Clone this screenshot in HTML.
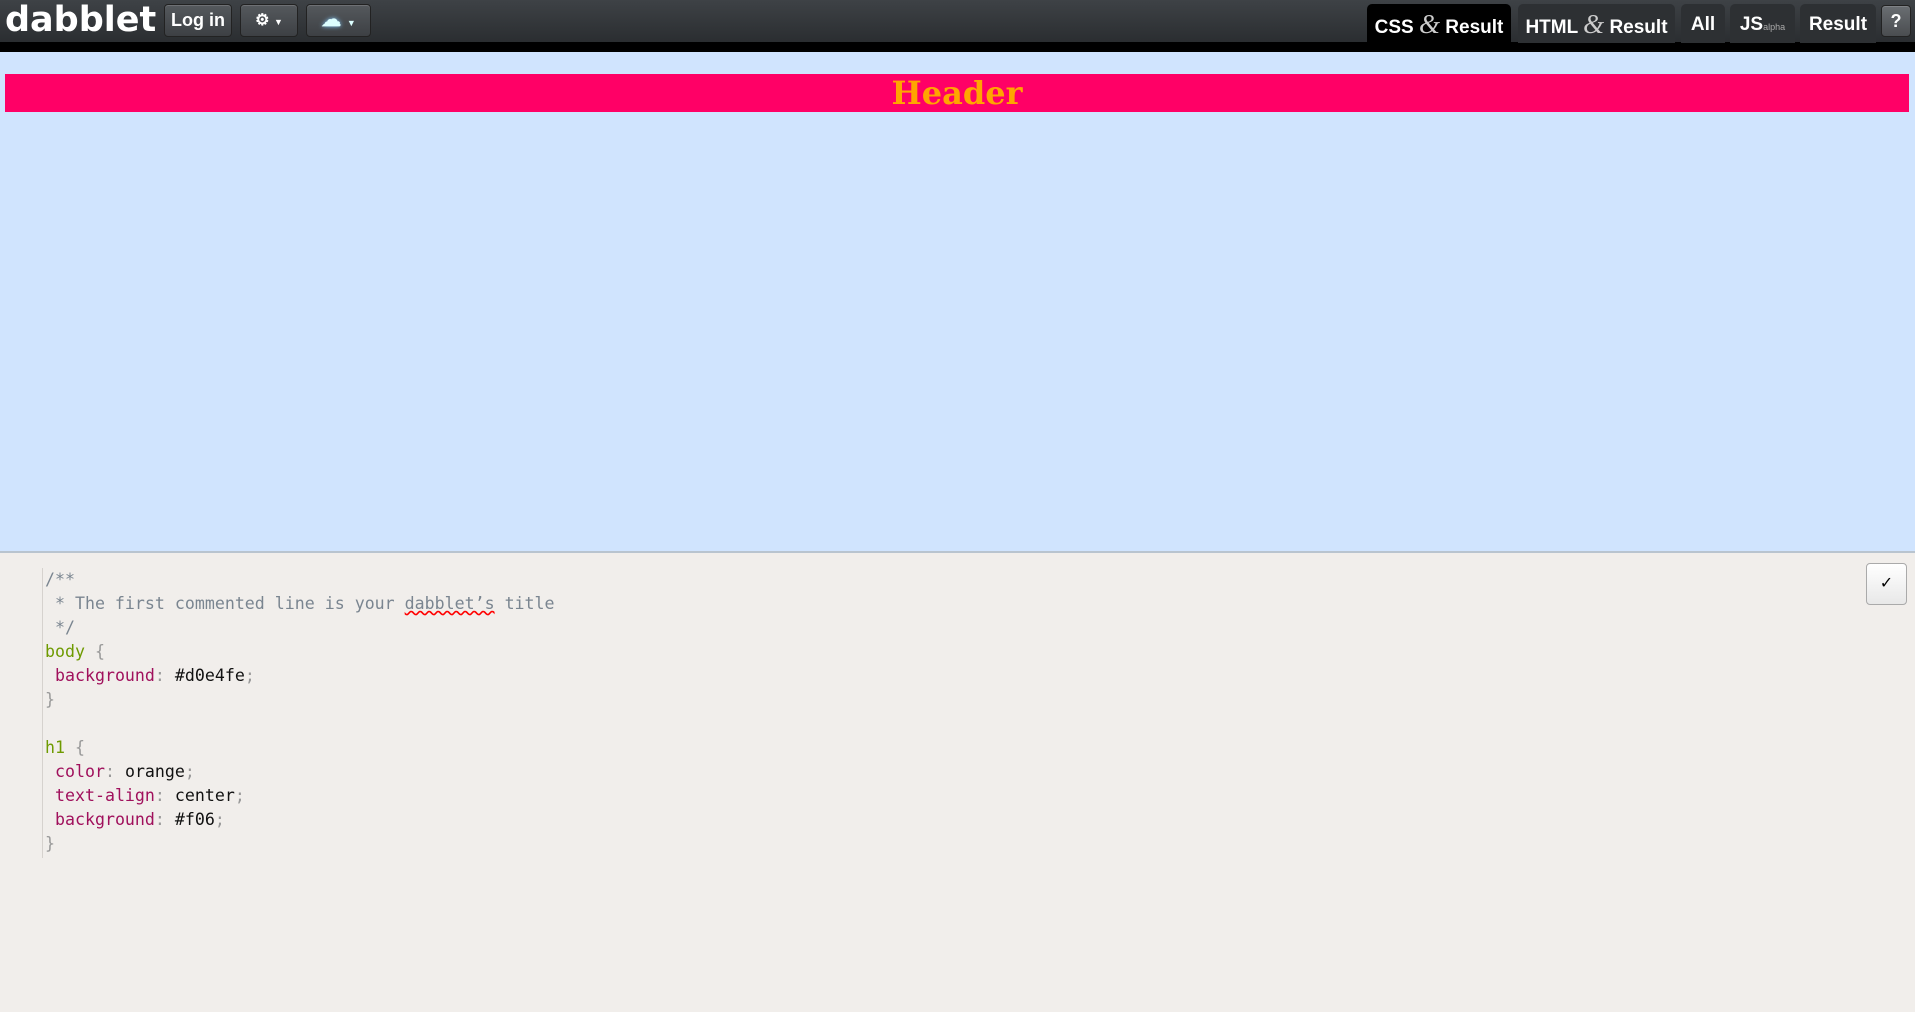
<!DOCTYPE html>
<html><head><meta charset="utf-8"><style>
*{margin:0;padding:0;box-sizing:border-box}
body{width:1915px;height:1012px;overflow:hidden;background:#f1eeeb;font-family:"Liberation Sans",sans-serif;position:relative}
#top{position:absolute;left:0;top:0;width:1915px;height:43px;background:linear-gradient(#3e4246,#2a2d30)}
#blk{position:absolute;left:0;top:42px;width:1915px;height:10px;background:#000}
.logo{position:absolute;left:5px;top:0;font:bold 35px "DejaVu Sans",sans-serif;color:#fff;letter-spacing:0px;line-height:40px}
.btn{position:absolute;top:4px;height:33px;border-radius:4px;background:linear-gradient(#55595d,#3d4044);border:1px solid #222;box-shadow:inset 0 1px 0 rgba(255,255,255,.15);color:#fff;font-weight:bold;font-size:18px;line-height:31px;text-align:center}
.tab{position:absolute;top:4px;height:39px;border-radius:5px 5px 0 0;background:#2d3033;color:#fff;font-weight:bold;font-size:19px;line-height:41px;text-align:center;white-space:nowrap}
.amp{font-family:"Liberation Serif",serif;font-style:italic;font-weight:normal;font-size:27px;color:#ccc}
#res{position:absolute;left:0;top:52px;width:1915px;height:501px;background:#d0e4fe;border-bottom:2px solid #b9c4cf}
h1{position:absolute;left:5px;top:74px;width:1904px;height:38px;background:#f06;color:orange;text-align:center;font:bold 32px "DejaVu Serif",serif;line-height:38px}
#code{position:absolute;left:42px;top:568px;border-left:1px solid #d6d2ce;font:16.6px/24px "DejaVu Sans Mono",monospace;white-space:pre;padding-left:2px;height:290px}
.c{color:#7a8590}.s{color:#6e9a00}.p{color:#a0105c}.v{color:#111}.g{color:#999}
#chk{position:absolute;left:1866px;top:563px;width:41px;height:42px;border:1px solid #aaa;border-radius:4px;background:linear-gradient(#fff,#e8e8e8);text-align:center;line-height:40px;font-size:16px}
</style></head><body>
<div id="top"></div><div id="blk"></div>
<div class="logo">dabblet</div>
<div class="btn" style="left:164px;width:68px">Log in</div>
<div class="btn" style="left:240px;width:58px;font-size:16px">⚙ <span style="font-size:9px">▼</span></div>
<div class="btn" style="left:306px;width:65px;font-size:20px;color:#dff"><span style="text-shadow:0 0 5px #8cf">☁</span> <span style="font-size:9px">▼</span></div>
<div class="tab" style="left:1367px;width:144px;background:#000">CSS <span class="amp">&amp;</span> Result</div>
<div class="tab" style="left:1518px;width:157px">HTML <span class="amp">&amp;</span> Result</div>
<div class="tab" style="left:1681px;width:44px">All</div>
<div class="tab" style="left:1730px;width:65px">JS<span style="font-size:9px;font-weight:normal;color:#aaa">alpha</span></div>
<div class="tab" style="left:1800px;width:76px">Result</div>
<div class="btn" style="left:1881px;width:30px;top:5px;height:32px;background:linear-gradient(#6a6e72,#4a4d50)">?</div>
<div id="res"></div>
<h1>Header</h1>
<div id="code"><span class="c">/**
 * The first commented line is your <span style="text-decoration:underline wavy red">dabblet’s</span> title
 */</span>
<span class="s">body</span> <span class="g">{</span>
 <span class="p">background</span><span class="g">:</span> <span class="v">#d0e4fe</span><span class="g">;</span>
<span class="g">}</span>

<span class="s">h1</span> <span class="g">{</span>
 <span class="p">color</span><span class="g">:</span> <span class="v">orange</span><span class="g">;</span>
 <span class="p">text-align</span><span class="g">:</span> <span class="v">center</span><span class="g">;</span>
 <span class="p">background</span><span class="g">:</span> <span class="v">#f06</span><span class="g">;</span>
<span class="g">}</span></div>
<div id="chk">✓</div>
</body></html>
